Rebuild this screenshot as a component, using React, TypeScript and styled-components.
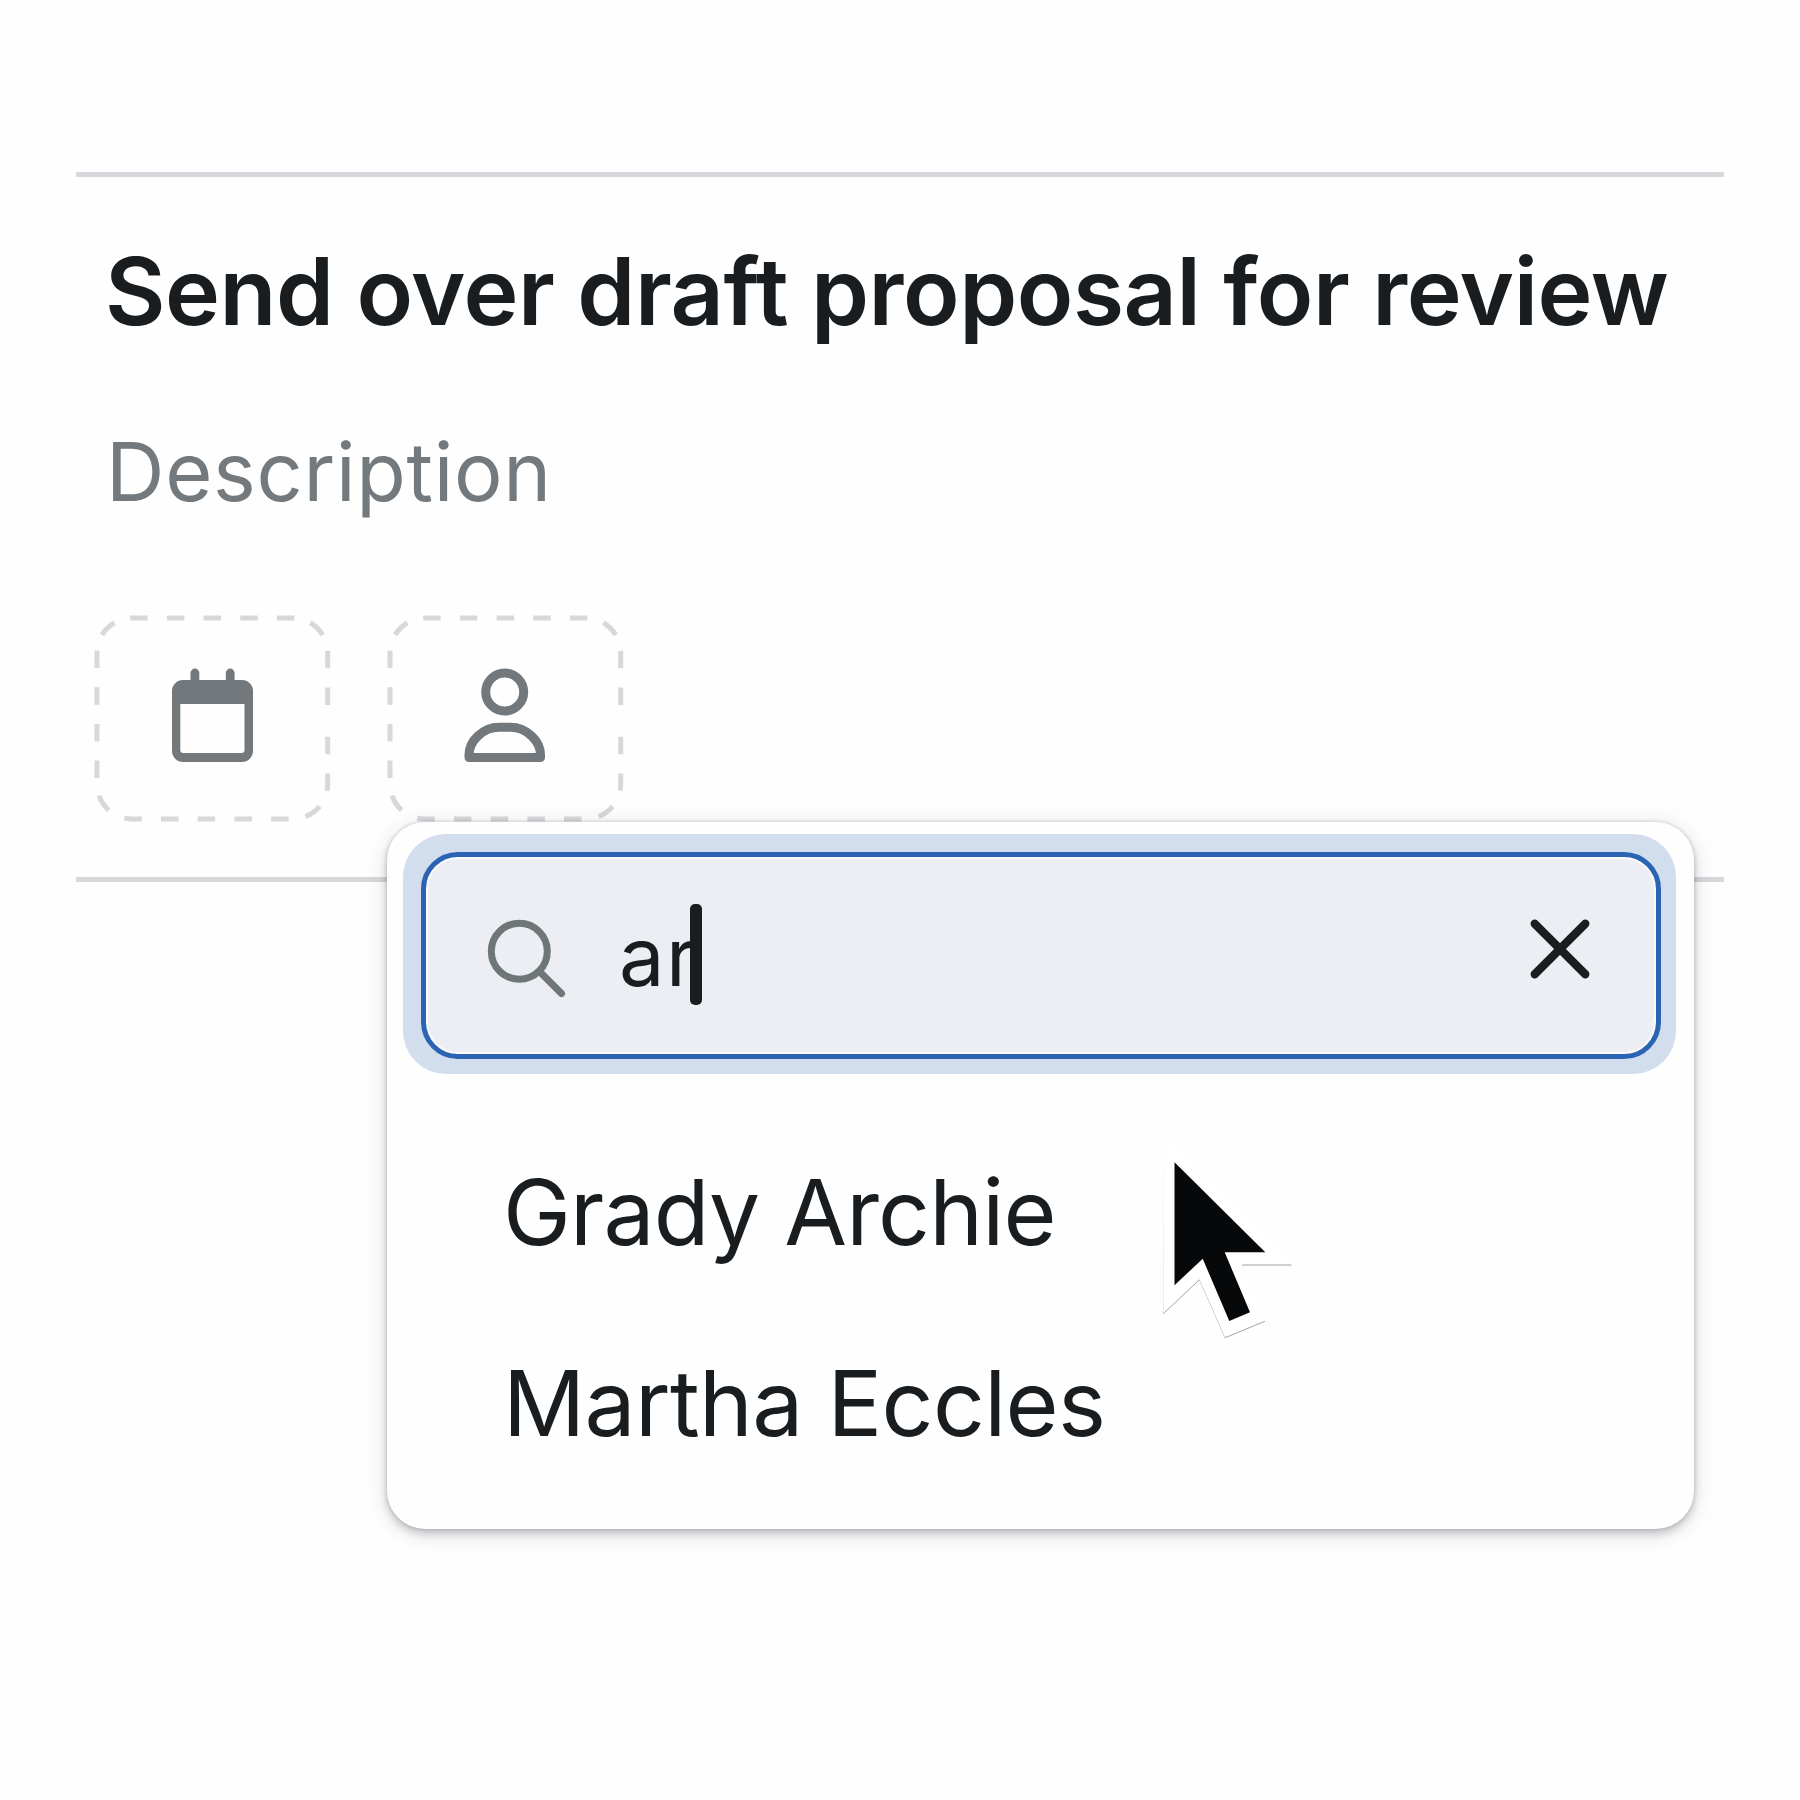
import React from 'react';
import styled, { createGlobalStyle } from 'styled-components';

const GlobalStyle = createGlobalStyle`
  *, *::before, *::after { box-sizing: border-box; }
  body {
    margin: 0;
    background: #fefefe;
    font-family: Inter, "Liberation Sans", sans-serif;
    color: #191d20;
  }
`;

const Page = styled.main`
  width: 1800px;
  height: 1800px;
  overflow: hidden;
  padding: 172px 76px 0;
`;

const TaskCard = styled.section`
  display: flex;
  flex-direction: column;
  height: 710px;
  border-top: 5px solid #d6d8db;
  border-bottom: 5px solid #d6d8db;
  padding: 64px 18px 0;
`;

const Title = styled.h1`
  margin: 0;
  padding-left: 11px;
  font-size: 93px;
  font-weight: 600;
  line-height: 100px;
  letter-spacing: -0.46px;
  white-space: nowrap;
`;

const Description = styled.p`
  margin: 81px 0 0;
  padding-left: 12px;
  font-size: 81px;
  line-height: 100px;
  letter-spacing: 0.7px;
  color: #73797c;
  white-space: nowrap;
`;

const Actions = styled.div`
  display: flex;
  gap: 56px;
  margin-top: 93px;
`;

const ActionSlot = styled.div`
  position: relative;
`;

const ActionButton = styled.button`
  position: relative;
  display: block;
  width: 237px;
  height: 207px;
  padding: 0;
  border: 0;
  background: none;
  color: #72787b;
`;

const Outline = styled.svg`
  position: absolute;
  inset: 0;
`;

const Glyph = styled.svg`
  display: block;
  width: 237px;
  height: 207px;
`;

const Menu = styled.div`
  position: absolute;
  top: 207px;
  left: 0;
  width: 1307px;
  height: 707px;
  padding: 12px 18px 0 16px;
  border-radius: 38px;
  background: #fefefe;
  box-shadow: 0 0 3px 1px rgba(40, 45, 60, 0.12), 0 5px 8px rgba(30, 35, 45, 0.2),
    0 4px 24px rgba(30, 35, 45, 0.13);
`;

const FocusRing = styled.div`
  padding: 18px 15px 15px 18px;
  border-radius: 43px;
  height: 240px;
  background: #d2deee;
`;

const SearchField = styled.div`
  display: flex;
  align-items: center;
  height: 207px;
  border: 5px solid #2b64b3;
  border-radius: 37px;
  background: #edeef3;
  box-shadow: inset 0 0 0 2px #fafbfd;
  padding: 0 62px 0 58px;
`;

const SearchIcon = styled.svg`
  flex: none;
  width: 84px;
  height: 84px;
  margin-right: 51px;
`;

const Query = styled.span`
  flex: none;
  margin-top: 2px;
  font-size: 81px;
  line-height: 100px;
  letter-spacing: 1.5px;
`;

const Caret = styled.span`
  width: 12px;
  height: 101px;
  margin: 0 0 3px -8px;
  border-radius: 5px;
  background: #191d20;
`;

const ClearIcon = styled.svg`
  flex: none;
  width: 68px;
  height: 68px;
  margin: 0 0 13px auto;
`;

const People = styled.ul`
  list-style: none;
  margin: 43px 0 0;
  padding: 0 0 0 100px;
`;

const Person = styled.li<{ $spacing: number }>`
  height: 191px;
  line-height: 191px;
  font-size: 91px;
  letter-spacing: ${(p) => p.$spacing}px;
  white-space: nowrap;
`;

const Pointer = styled.svg`
  position: absolute;
  left: 763px;
  top: 308px;
`;

const PointerRim = styled.path`
  fill: #fff;
  filter: drop-shadow(0 1px 0.7px rgba(0, 0, 0, 0.36));
`;

const D = 17.5;
const run = (count: number, exitGap: number) =>
  Array.from({ length: count }, (_, i) => [D, i === count - 1 ? exitGap : 19.2]).flat();

// Dashes run clockwise from just below the middle of the right side.
const dashes = [
  ...run(2, 17.3), D, 17.3,
  ...run(5, 17.8), D, 17.8,
  ...run(4, 16.5), D, 16.5,
  ...run(5, 16.7), D, 16.7,
  ...run(2, 200),
].join(' ');

const DashedOutline = () => (
  <Outline width="237" height="207" viewBox="0 0 237 207" fill="none">
    <path
      d="M233.7 121.7V169a35 35 0 0 1-35 35H38a35 35 0 0 1-35-35V38a35 35 0 0 1 35-35H198.7a35 35 0 0 1 35 35V121.7"
      stroke="#d6d8da"
      strokeWidth="5"
      strokeDasharray={dashes}
    />
  </Outline>
);

const people = [
  { name: 'Grady Archie', spacing: -0.83 },
  { name: 'Martha Eccles', spacing: -0.67 },
];

export default function App() {
  return (
    <Page>
      <GlobalStyle />
      <TaskCard>
        <Title>Send over draft proposal for review</Title>
        <Description>Description</Description>
        <Actions>
          <ActionSlot>
            <ActionButton aria-label="Due date">
              <DashedOutline />
              <Glyph viewBox="94 615 237 207" fill="currentColor">
                <path
                  fillRule="evenodd"
                  d="M190.5 680V673a4.4 4.4 0 0 1 8.8 0V680H225.8V673a4.4 4.4 0 0 1 8.8 0V680H242a11 11 0 0 1 11 11V751a11 11 0 0 1-11 11H183a11 11 0 0 1-11-11V691a11 11 0 0 1 11-11ZM180.3 704V750q0 3 3 3H241.5q3 0 3-3V704Z"
                />
              </Glyph>
            </ActionButton>
          </ActionSlot>
          <ActionSlot>
            <ActionButton aria-label="Assignee">
              <DashedOutline />
              <Glyph viewBox="387 615 237 207" fill="none" stroke="currentColor" strokeWidth="9">
                <circle cx="504.7" cy="692" r="19" />
                <path
                  strokeLinejoin="round"
                  d="M469 757.5V755C469 741 483 727.3 499 727.3H510.5C526.5 727.3 540.5 741 540.5 755V757.5Z"
                />
              </Glyph>
            </ActionButton>
            <Menu>
              <FocusRing>
                <SearchField>
                  <SearchIcon viewBox="484 913 84 84" fill="none" stroke="#6f7678" strokeWidth="7">
                    <circle cx="519.3" cy="950.3" r="28" />
                    <path strokeLinecap="round" d="M540 971L561.5 992.5" />
                  </SearchIcon>
                  <Query>ar</Query>
                  <Caret />
                  <ClearIcon
                    viewBox="1526 915 68 68"
                    fill="none"
                    stroke="#1a1e20"
                    strokeWidth="8.3"
                    strokeLinecap="round"
                  >
                    <path d="M1534.7 923.7L1585.3 974.3M1585.3 923.7L1534.7 974.3" />
                  </ClearIcon>
                </SearchField>
              </FocusRing>
              <People>
                {people.map((p) => (
                  <Person key={p.name} $spacing={p.spacing}>
                    {p.name}
                  </Person>
                ))}
              </People>
              <Pointer width="160" height="220" viewBox="1150 1130 160 220">
                <PointerRim d="M1163 1137L1292.3 1264.5H1242L1265 1320.7L1225 1337.3L1199.3 1279.3L1163.3 1313.3Z" />
                <path
                  d="M1174.5 1162.3L1265.3 1252.3H1224.7L1250 1312.3L1229.3 1321L1202.7 1258.7L1174.5 1285.3Z"
                  fill="#070809"
                />
              </Pointer>
            </Menu>
          </ActionSlot>
        </Actions>
      </TaskCard>
    </Page>
  );
}
